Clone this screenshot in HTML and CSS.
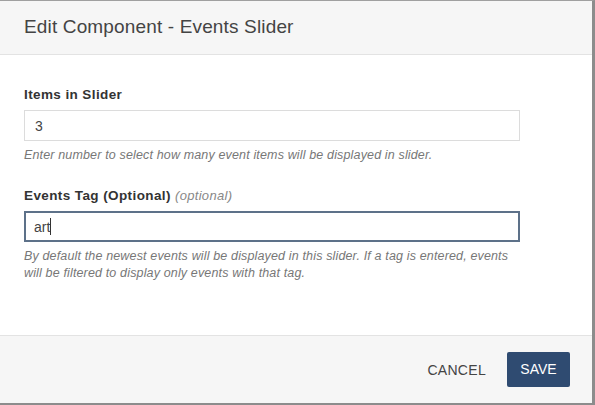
FILE: index.html
```html
<!DOCTYPE html>
<html>
<head>
<meta charset="utf-8">
<link rel="stylesheet" href="styles.css">
</head>
<body>
<div class="modal">
  <div class="modal-header">
    <h1 class="title">Edit Component - Events Slider</h1>
  </div>
  <div class="modal-body">
    <div class="field">
      <div class="label">Items in Slider</div>
      <div class="input">3</div>
      <div class="help">Enter number to select how many event items will be displayed in slider.</div>
    </div>
    <div class="field">
      <div class="label">Events Tag (Optional) <span class="opt">(optional)</span></div>
      <div class="input focused">art<span class="caret"></span></div>
      <div class="help">By default the newest events will be displayed in this slider. If a tag is entered, events will be filtered to display only events with that tag.</div>
    </div>
  </div>
  <div class="modal-footer">
    <span class="btn-cancel">CANCEL</span>
    <span class="btn-save">SAVE</span>
  </div>
</div>
</body>
</html>
```
FILE: styles.css
```css
html, body {
  margin: 0;
  padding: 0;
  background: #fff;
}
body {
  font-family: "Liberation Sans", Arial, sans-serif;
  color: #333;
}
.modal {
  width: 592px;
  height: 402px;
  border-top: 1px solid #a0a0a0;
  border-right: 3px solid #8c8c8c;
  border-bottom: 2px solid #8c8c8c;
  display: flex;
  flex-direction: column;
  background: #fff;
}
.modal-header {
  background: #f6f6f6;
  border-bottom: 1px solid #e3e3e3;
  display: flex;
  align-items: center;
  padding-left: 24px;
  box-sizing: border-box;
  height: 54px;
}
.title {
  margin: 0;
  font-size: 19px;
  font-weight: normal;
  color: #444;
  padding-bottom: 1px;
  letter-spacing: 0.15px;
}
.modal-body {
  flex: 1;
  padding: 32px 72px 0 24px;
  display: flex;
  flex-direction: column;
  gap: 24px;
}
.label {
  font-size: 13.5px;
  line-height: 16px;
  font-weight: bold;
  color: #333;
  margin-bottom: 7px;
  letter-spacing: 0.4px;
}
.opt {
  font-weight: normal;
  font-style: italic;
  color: #888;
  font-size: 13px;
  letter-spacing: 0.3px;
}
.input {
  height: 31px;
  box-sizing: border-box;
  border: 1px solid #dcdcdc;
  padding: 0 10px;
  display: flex;
  align-items: center;
  font-size: 14px;
  color: #444;
}
.input.focused {
  border: 2px solid #5d7189;
  padding: 0 8px;
}
.caret {
  display: inline-block;
  width: 1px;
  height: 17px;
  background: #333;
}
.help {
  font-size: 12.5px;
  font-style: italic;
  color: #777;
  line-height: 17px;
  margin-top: 6px;
  letter-spacing: 0.15px;
}
.modal-footer {
  height: 67px;
  background: #f6f6f6;
  border-top: 1px solid #e3e3e3;
  display: flex;
  align-items: center;
  justify-content: flex-end;
  padding-right: 22px;
  gap: 21px;
}
.btn-cancel {
  font-size: 14px;
  color: #444;
  letter-spacing: 0.3px;
}
.btn-save {
  background: #2f4b71;
  color: #fff;
  font-size: 14px;
  width: 63px;
  height: 35px;
  display: flex;
  align-items: center;
  justify-content: center;
  border-radius: 2px;
  margin-bottom: 1px;
}
```
